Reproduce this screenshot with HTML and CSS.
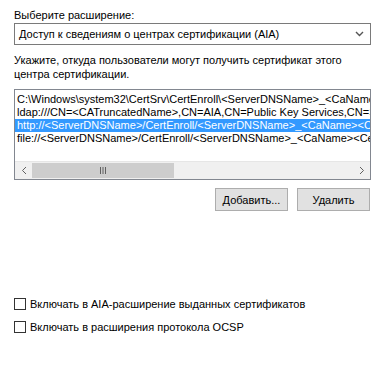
FILE: index.html
```html
<!DOCTYPE html>
<html lang="ru">
<head>
    <meta charset="UTF-8">
    <title>Расширения</title>
    <link rel="stylesheet" href="styles.css">
</head>
<body>
    <div class="page">
        <div class="label">Выберите расширение:</div>
        <div class="combo">
            <span>Доступ к сведениям о центрах сертификации (AIA)</span>
            <svg class="combo-arrow" width="9" height="6" viewBox="0 0 9 6">
                <path d="M1 1 L4.5 4.5 L8 1" fill="none" stroke="#555" stroke-width="1.4"/>
            </svg>
        </div>

        <p class="hint">Укажите, откуда пользователи могут получить сертификат этого центра сертификации.</p>

        <div class="listbox">
            <div class="items">
                <div class="item">C:\Windows\system32\CertSrv\CertEnroll\&lt;ServerDNSName&gt;_&lt;CaName&gt;&lt;CertificateName&gt;.crt</div>
                <div class="item">ldap:///CN=&lt;CATruncatedName&gt;,CN=AIA,CN=Public Key Services,CN=Services,&lt;ConfigurationContainer&gt;</div>
                <div class="item selected">http://&lt;ServerDNSName&gt;/CertEnroll/&lt;ServerDNSName&gt;_&lt;CaName&gt;&lt;CertificateName&gt;.crt</div>
                <div class="item">file://&lt;ServerDNSName&gt;/CertEnroll/&lt;ServerDNSName&gt;_&lt;CaName&gt;&lt;CertificateName&gt;.crt</div>
            </div>
            <div class="hscroll">
                <div class="sb-btn">
                    <svg width="6" height="9" viewBox="0 0 6 9"><path d="M5 1 L1.5 4.5 L5 8" fill="none" stroke="#606060" stroke-width="1"/></svg>
                </div>
                <div class="sb-track">
                    <div class="sb-thumb">
                        <svg width="8" height="7" viewBox="0 0 8 7"><path d="M1.5 0 V7 M4 0 V7 M6.5 0 V7" stroke="#606060" stroke-width="1"/></svg>
                    </div>
                </div>
                <div class="sb-btn">
                    <svg width="6" height="9" viewBox="0 0 6 9"><path d="M1 1 L4.5 4.5 L1 8" fill="none" stroke="#606060" stroke-width="1"/></svg>
                </div>
            </div>
        </div>

        <div class="buttons">
            <button class="btn">Добавить...</button>
            <button class="btn">Удалить</button>
        </div>

        <div class="checks">
            <label class="check"><span class="box"></span>Включать в AIA-расширение выданных сертификатов</label>
            <label class="check"><span class="box"></span>Включать в расширения протокола OCSP</label>
        </div>
    </div>
</body>
</html>
```

FILE: styles.css
```css
body {
    margin: 0;
    background: #ffffff;
    font-family: "Liberation Sans", Arial, sans-serif;
    font-size: 11px;
    color: #000000;
}
.page {
    padding: 7px 9px 0 14px;
}
.label {
    height: 16px;
    line-height: 16px;
}
.combo {
    height: 20px;
    border: 1px solid #7a7a7a;
    display: flex;
    align-items: center;
    justify-content: space-between;
    padding: 0 6px 0 4px;
}
.combo-arrow {
    display: block;
}
.hint {
    margin: 8px 0 0 0;
    line-height: 14px;
    width: 340px;
}
.listbox {
    margin-top: 8px;
    width: 355px;
    height: 89px;
    border: 1px solid #828790;
    display: flex;
    flex-direction: column;
    overflow: hidden;
}
.items {
    flex: 1;
    padding-top: 3px;
}
.item {
    height: 13px;
    line-height: 13px;
    padding-left: 2px;
    white-space: nowrap;
    overflow: hidden;
}
.item.selected {
    background: #3399ff;
    color: #ffffff;
}
.hscroll {
    height: 17px;
    display: flex;
    background: #f0f0f0;
    border-top: 1px solid #e6e6e6;
}
.sb-btn {
    width: 17px;
    display: flex;
    align-items: center;
    justify-content: center;
}
.sb-track {
    flex: 1;
    display: flex;
    align-items: center;
}
.sb-thumb {
    width: 142px;
    height: 15px;
    background: #cdcdcd;
    display: flex;
    align-items: center;
    justify-content: center;
}
.buttons {
    display: flex;
    justify-content: flex-end;
    gap: 9px;
    margin-top: 8px;
    width: 356px;
}
.btn {
    width: 73px;
    height: 23px;
    background: #e1e1e1;
    border: 1px solid #adadad;
    font-family: "Liberation Sans", Arial, sans-serif;
    font-size: 11px;
    padding: 0;
    color: #000000;
}
.checks {
    margin-top: 87px;
    display: flex;
    flex-direction: column;
    gap: 11px;
}
.check {
    display: flex;
    align-items: center;
    height: 12px;
}
.box {
    width: 10px;
    height: 10px;
    border: 1px solid #333333;
    background: #ffffff;
    margin-right: 4px;
}
```
